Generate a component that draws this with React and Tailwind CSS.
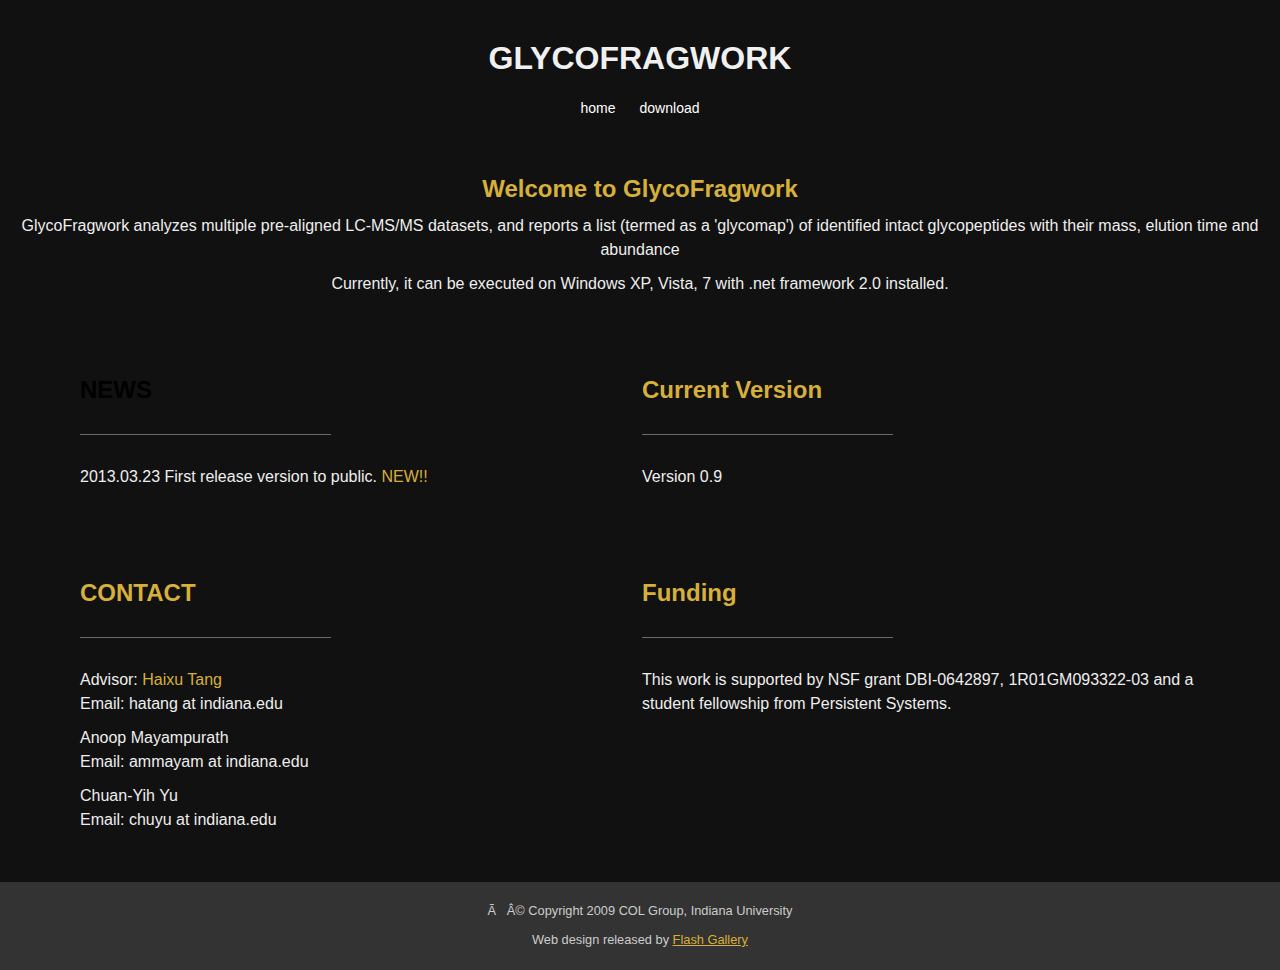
import React from 'react';

const gold = 'text-[#d6b03a]';

const Section = ({ title, titleClass, children }) => (
  <div>
    <h2 className={`text-[24px] leading-[28px] font-bold ${titleClass}`}>{title}</h2>
    <hr className="mt-[30px] w-[251px] border-0 border-t border-[#6a6a6a]" />
    <div className="mt-[30px] text-[16px] leading-[24px] text-[#eeeeee]">{children}</div>
  </div>
);

export default function App() {
  return (
    <div className="min-h-screen bg-[#111111] text-[#eeeeee]" style={{ fontFamily: '"Liberation Sans", Arial, sans-serif' }}>
      <header className="pt-[39px] text-center">
        <h1 className="text-[32px] leading-[38px] font-bold text-[#f0f0f0]">GLYCOFRAGWORK</h1>
        <nav className="mt-[21px] flex justify-center text-[14px] leading-[20px] text-white">
          <a href="#" className="px-3">home</a>
          <a href="#" className="px-3">download</a>
        </nav>
      </header>

      <section className="mt-[57px] px-5 text-center">
        <h2 className={`text-[24px] leading-[28px] font-bold ${gold}`}>Welcome to GlycoFragwork</h2>
        <p className="mt-[11px] text-[16px] leading-[24px]">
          GlycoFragwork analyzes multiple pre-aligned LC-MS/MS datasets, and reports a list (termed as a 'glycomap') of identified intact glycopeptides with their mass, elution time and abundance
        </p>
        <p className="mt-[10px] text-[16px] leading-[24px]">
          Currently, it can be executed on Windows XP, Vista, 7 with .net framework 2.0 installed.
        </p>
      </section>

      <main className="px-[80px]">
        <div className="mt-[80px] grid grid-cols-[562px_1fr]">
          <Section title="NEWS" titleClass="text-black">
            <p>
              2013.03.23 First release version to public. <span className={gold}>NEW!!</span>
            </p>
          </Section>
          <Section title="Current Version" titleClass={gold}>
            <p>Version 0.9</p>
          </Section>
        </div>

        <div className="mt-[90px] grid grid-cols-[562px_1fr]">
          <Section title="CONTACT" titleClass={gold}>
            <p>
              Advisor: <a href="#" className={gold}>Haixu Tang</a>
              <br />
              Email: hatang at indiana.edu
            </p>
            <p className="mt-[10px]">
              Anoop Mayampurath
              <br />
              Email: ammayam at indiana.edu
            </p>
            <p className="mt-[10px]">
              Chuan-Yih Yu
              <br />
              Email: chuyu at indiana.edu
            </p>
          </Section>
          <Section title="Funding" titleClass={gold}>
            <p>
              This work is supported by NSF grant DBI-0642897, 1R01GM093322-03 and a student fellowship from Persistent Systems.
            </p>
          </Section>
        </div>
      </main>

      <footer className="mt-[50px] bg-[#333333] pt-[20px] pb-[21px] text-center text-[12.8px] leading-[18px] text-[#cccccc]">
        <p>Ã&nbsp;&nbsp;&nbsp;Â© Copyright 2009 COL Group, Indiana University</p>
        <p className="mt-[11px]">
          Web design released by <a href="#" className={`${gold} underline`}>Flash Gallery</a>
        </p>
      </footer>
    </div>
  );
}
